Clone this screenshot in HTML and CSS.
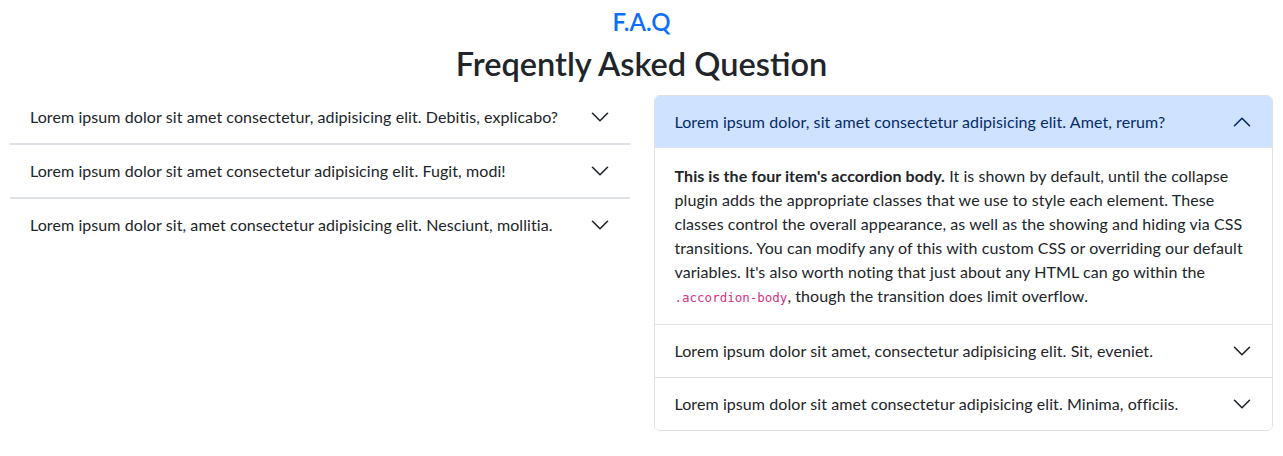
FILE: index.html
```html
<!DOCTYPE html>
<html lang="en">
<head>
<meta charset="utf-8">
<title>FAQ</title>
<link rel="stylesheet" href="styles.css">
</head>
<body>
<header class="faq-head">
  <h4 class="faq-kicker">F.A.Q</h4>
  <h2 class="faq-title">Freqently Asked Question</h2>
</header>
<main class="faq-grid">
  <div class="accordion accordion-flush">
    <div class="acc-item">
      <button class="acc-btn collapsed"><span>Lorem ipsum dolor sit amet consectetur, adipisicing elit. Debitis, explicabo?</span><svg class="chev" viewBox="0 0 16 16"><path d="M2 5L8 11L14 5"/></svg></button>
    </div>
    <div class="acc-item">
      <button class="acc-btn collapsed"><span>Lorem ipsum dolor sit amet consectetur adipisicing elit. Fugit, modi!</span><svg class="chev" viewBox="0 0 16 16"><path d="M2 5L8 11L14 5"/></svg></button>
    </div>
    <div class="acc-item">
      <button class="acc-btn collapsed"><span>Lorem ipsum dolor sit, amet consectetur adipisicing elit. Nesciunt, mollitia.</span><svg class="chev" viewBox="0 0 16 16"><path d="M2 5L8 11L14 5"/></svg></button>
    </div>
  </div>
  <div class="accordion accordion-boxed">
    <div class="acc-item">
      <button class="acc-btn active"><span>Lorem ipsum dolor, sit amet consectetur adipisicing elit. Amet, rerum?</span><svg class="chev" viewBox="0 0 16 16"><path d="M2 11L8 5L14 11"/></svg></button>
      <div class="acc-body"><strong>This is the four item's accordion body.</strong> It is shown by default, until the collapse plugin adds the appropriate classes that we use to style each element. These classes control the overall appearance, as well as the showing and hiding via CSS transitions. You can modify any of this with custom CSS or overriding our default variables. It's also worth noting that just about any HTML can go within the <code>.accordion-body</code>, though the transition does limit overflow.</div>
    </div>
    <div class="acc-item">
      <button class="acc-btn collapsed"><span>Lorem ipsum dolor sit amet, consectetur adipisicing elit. Sit, eveniet.</span><svg class="chev" viewBox="0 0 16 16"><path d="M2 5L8 11L14 5"/></svg></button>
    </div>
    <div class="acc-item">
      <button class="acc-btn collapsed"><span>Lorem ipsum dolor sit amet consectetur adipisicing elit. Minima, officiis.</span><svg class="chev" viewBox="0 0 16 16"><path d="M2 5L8 11L14 5"/></svg></button>
    </div>
  </div>
</main>
</body>
</html>
```

FILE: styles.css
```css
* { box-sizing: border-box; }
body {
  margin: 0;
  font-family: Lato, "Noto Sans", sans-serif;
  font-size: 16px;
  line-height: 24px;
  color: #212529;
  background: #fff;
}
.faq-head {
  text-align: center;
  padding-top: 7px;
}
.faq-kicker {
  margin: 0 0 8px;
  font-size: 24px;
  line-height: 29px;
  font-weight: 600;
  color: #0d6efd;
}
.faq-title {
  margin: 0 0 8px;
  font-size: 32.5px;
  line-height: 39px;
  font-weight: 600;
  color: #212529;
}
.faq-grid {
  display: grid;
  grid-template-columns: 1fr 1fr;
  column-gap: 24px;
  padding: 0 10px;
  align-items: start;
}
.accordion-boxed {
  margin-top: 4px;
  border: 1px solid #dee2e6;
  border-radius: 6px;
  overflow: hidden;
}
.acc-item + .acc-item { border-top: 1px solid #dee2e6; }
.accordion-flush .acc-item { border-bottom: 1px solid #dee2e6; }
.accordion-flush .acc-item:last-child { border-bottom: 0; }
.acc-btn {
  display: flex;
  align-items: center;
  width: 100%;
  height: 52px;
  padding: 0 20px;
  border: 0;
  background: #fff;
  font: inherit;
  letter-spacing: 0.08px;
  line-height: 24px;
  color: #212529;
  text-align: left;
}
.acc-btn span { flex: 1; }
.acc-btn.active {
  background: #cfe2ff;
  color: #052c65;
  box-shadow: inset 0 -1px 0 #dee2e6;
}
.chev {
  width: 20px;
  height: 20px;
  flex-shrink: 0;
  margin-left: auto;
}
.chev path {
  fill: none;
  stroke: #212529;
  stroke-width: 1.3;
  stroke-linecap: round;
  stroke-linejoin: round;
}
.acc-btn.active .chev path { stroke: #052c65; }
.acc-body {
  padding: 16px 20px;
  line-height: 24px;
  letter-spacing: 0.08px;
}
.acc-body strong { font-weight: 700; }
.acc-body code {
  font-family: "DejaVu Sans Mono", "Liberation Mono", monospace;
  font-size: 12.5px;
  line-height: 1;
  letter-spacing: 0;
  color: #d63384;
}
```
